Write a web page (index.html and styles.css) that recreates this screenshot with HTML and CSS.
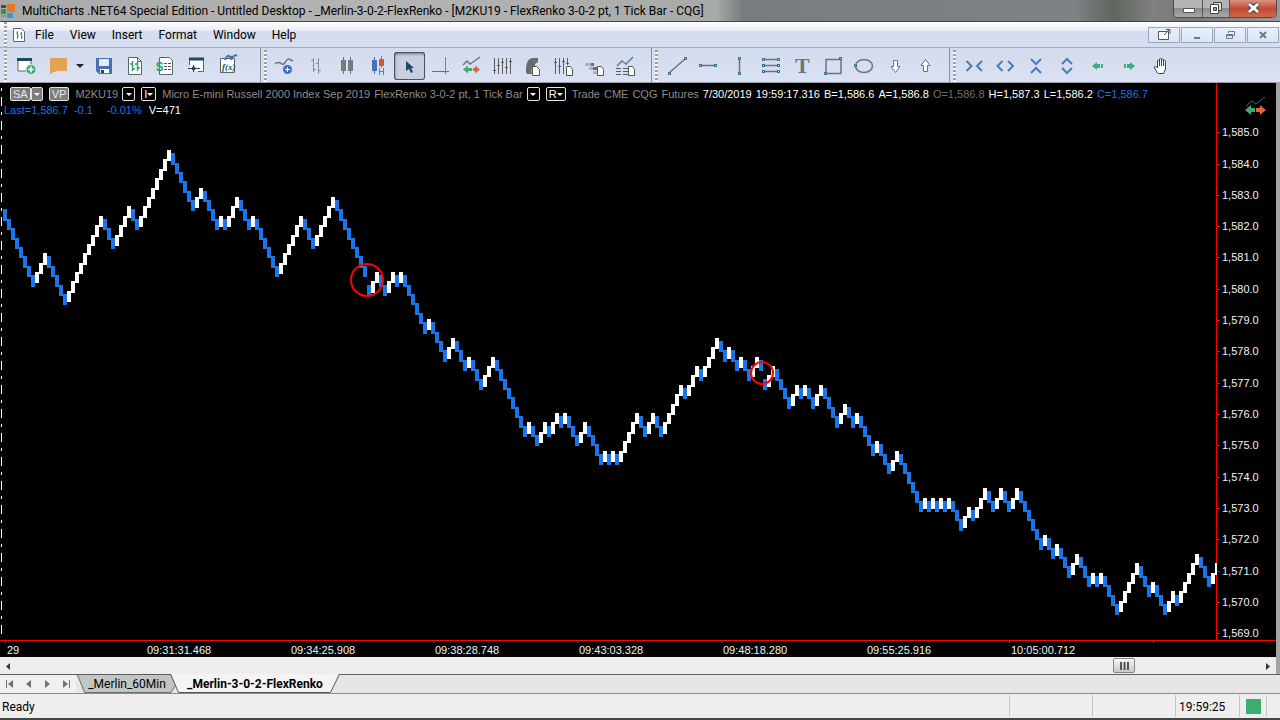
FILE: index.html
```
<!DOCTYPE html>
<html lang="en">
<head>
  <meta charset="UTF-8" />
  <meta name="viewport" content="width=device-width, initial-scale=1.0"/>
  <title>MultiCharts .NET64 Special Edition</title>
  <link rel="stylesheet" href="styles.css">
</head>

<body>
  <div class="app">
    <header class="titlebar">
      <svg class="logo" width="16" height="16" viewBox="0 0 16 16">
        <path d="M1 2h5v3H1z" fill="#4b4a2a"/>
        <path d="M7 1h8v8H7z" fill="#e07b1f"/>
        <path d="M1 6h5v5H1z" fill="#2c9a43"/>
        <path d="M1 12h5v2H1z" fill="#8e9294"/>
        <path d="M7 10h6v5H7z" fill="#2a9be0"/>
      </svg>
      <span class="title">MultiCharts .NET64 Special Edition - Untitled Desktop - _Merlin-3-0-2-FlexRenko - [M2KU19 - FlexRenko 3-0-2 pt, 1 Tick Bar - CQG]</span>
      <div class="window-buttons">
        <button aria-label="Minimize"><svg width="28" height="17"><path d="M9.500 8.500h11v4h-11z" fill="#fff" stroke="#555"/></svg></button>
        <button aria-label="Restore"><svg width="26" height="17"><path d="M10.500 2.500h8v8h-8z" fill="#ddd" stroke="#444"/><path d="M7.500 4.500h8v9h-8z" fill="#fff" stroke="#444"/><path d="M10.500 7.500h3v3h-3z" fill="#999" stroke="#444"/></svg></button>
        <button class="close" aria-label="Close"><svg width="46" height="17"><path d="M19 4l9 8M28 4l-9 8" stroke="#444" stroke-width="5"/><path d="M19 4l9 8M28 4l-9 8" stroke="#fff" stroke-width="3"/></svg></button>
      </div>
    </header>

    <nav class="menubar">
      <span class="grip"></span>
      <svg class="doc-icon" width="12" height="14"><path d="M.5.5h8l3 3v10H.5z" fill="#fff" stroke="#5c6468"/><path d="M4.500 3v8M3 5h1.500M4.500 8H6M8.500 4v7M7 6h1.500M8.500 9H10" stroke="#2f9e63" fill="none"/></svg>
      <button>File</button>
      <button>View</button>
      <button>Insert</button>
      <button>Format</button>
      <button>Window</button>
      <button>Help</button>
      <div class="child-buttons">
        <button aria-label="Detach"><svg width="30" height="14"><path d="M9.500 3.500h10v8h-10z" fill="#fff" stroke="#555"/><path d="M15 7l5-5M17 1.500h4v4" fill="none" stroke="#555"/></svg></button>
        <button aria-label="Minimize"><svg width="30" height="14"><path d="M12 10h6" stroke="#6d7b86" stroke-width="2"/></svg></button>
        <button aria-label="Restore"><svg width="30" height="14"><path d="M13.500 5V3.500h6v4H18M11.500 6.500h6v4h-6zM11.500 7.500h6" fill="none" stroke="#6d7b86"/></svg></button>
        <button aria-label="Close"><svg width="30" height="14"><path d="M12 4l6 6M18 4l-6 6" stroke="#6d7b86" stroke-width="2"/></svg></button>
      </div>
    </nav>

    <div class="toolbar">
      <div class="group main-group">
        <span class="grip"></span>
        <button aria-label="New window"><svg class="icon"><path d="M7 7h13v12H7z" fill="#fff" stroke="#5c6468"/><path d="M6 7.500h15" stroke="#1d4964" stroke-width="3"/><circle cx="20" cy="17.500" r="5" fill="#3cab70" stroke="#dce4f2"/><path d="M17 17.500h6M20 14.500v6" stroke="#fff" stroke-width="1.500"/></svg></button>
        <button aria-label="Open"><svg class="icon"><path d="M8 6h17v13h-9c-2 0-2 1-4 1-2 0-2 2-4 2z" fill="#e2a352"/></svg></button>
        <button class="caret" aria-label="Open recent"><svg width="15" height="28"><path d="M3 12h8l-4 4z" fill="#222"/></svg></button>
        <button aria-label="Save"><svg class="icon"><path d="M8 6h16v16H11l-3-3z" fill="#4472b5"/><path d="M11 7h10v7H11z" fill="#e4ebf5"/><path d="M12 17h9v4h-9z" fill="#fff"/><path d="M13 18h3v3h-3z" fill="#1d4964"/></svg></button>
        <button aria-label="New chart"><svg class="icon"><path d="M9.500 5.500h9l4 4v13h-13z" fill="#fff" stroke="#5c6468"/><path d="M18.500 5.500v4h4" fill="none" stroke="#5c6468"/><path d="M13.500 9v10M11 12h2.500M13.500 17H16M18.500 10v9M16 12h2.500M18.500 16H21" fill="none" stroke="#2f9e63" stroke-width="1.500"/></svg></button>
        <button aria-label="Market scanner"><svg class="icon"><path d="M9.500 5.500h10l3 3v14h-13z" fill="#fff" stroke="#5c6468"/><path d="M14 11.500h3M18 11.500h3M14 14.500h3M18 14.500h3M14 17.500h3M18 17.500h3" stroke="#555"/><text x="6" y="19" class="dollar">$</text></svg></button>
        <button aria-label="DOM window"><svg class="icon"><path d="M9 7h13v12H9z" fill="#fff"/><path d="M8.500 7v6M22.500 7v12.500H17" fill="none" stroke="#5c6468"/><path d="M8 7h15" stroke="#1d4964" stroke-width="3"/><path d="M7 16.500h12M12.500 13v7" stroke="#1d4964"/><circle cx="12.500" cy="16.500" r="2" fill="#1d4964"/></svg></button>
        <button aria-label="Formula editor"><svg class="icon"><path d="M8.500 6.500h14v14h-14z" fill="#fff" stroke="#5c6468"/><path d="M13 8c2-5 4-5 5-3s1 1 2-1M19 8c2-5 3-4 6-5" fill="none" stroke="#4472b5" stroke-width="2"/><text x="10" y="18" class="fx">f(x)</text></svg></button>
      </div>

      <div class="group">
        <span class="grip"></span>
        <button aria-label="Insert study"><svg class="icon"><path d="M5 12c3-3 5-1 7 0 3 2 4-6 7-5l4 2" fill="none" stroke="#707277" stroke-width="1.500"/><circle cx="17.500" cy="17.500" r="4.500" fill="#4472b5"/><path d="M15 17.500h5M17.500 15v5" stroke="#fff"/></svg></button>
        <button aria-label="OHLC bar"><svg class="icon"><path d="M12.500 6v14M10 8.500h2.500M12.500 17.500H15M17.500 6v16M15 11.500h2.500M17.500 18.500H20" stroke="#8b8d93" fill="none"/></svg></button>
        <button aria-label="Candlestick"><svg class="icon"><path d="M11.500 5v17M18.500 5v17" stroke="#6f7176"/><path d="M9 8h5v11H9zM16 8h5v11h-5z" fill="#77797d"/></svg></button>
        <button aria-label="Hollow candlestick"><svg class="icon"><path d="M11.500 5v17" stroke="#4472b5"/><path d="M9 8h5v11H9z" fill="#4472b5"/><path d="M18.500 4v12" stroke="#d9542f"/><path d="M16 7h5v7h-5z" fill="#d9542f"/><path d="M16.500 16v7M20.500 16v7M16.500 19.500h4" stroke="#2f9e63"/></svg></button>
        <button class="active" aria-label="Pointer"><svg class="icon"><path d="M12 9v10l3-2 2 4 2-1-2-4h3z" fill="#1d4964"/></svg></button>
        <button aria-label="Crosshair"><svg class="icon"><path d="M7 19.500h17" stroke="#4472b5"/><path d="M20.500 5v17" stroke="#5b86bd"/></svg></button>
        <button aria-label="Chart trading"><svg class="icon"><path d="M7 13l4-4 3 3 3-2 7-5" fill="none" stroke="#707277" stroke-width="1.500"/><path d="M7 17.500l5-4v2.500h4v3h-4v2.500z" fill="#3cab70"/><path d="M24 17.500l-5-4v2.500h-2v3h2v2.500z" fill="#e2643a"/></svg></button>
        <button aria-label="Bar spacing"><svg class="icon"><path d="M7.500 6v16M11.500 6v16M15.500 6v16M19.500 6v16M23.500 6v16M6 18.500h3M10 13.500h3M14 10.500h3M18 15.500h3M22 9.500h3" stroke="#5a5c60" fill="none"/></svg></button>
        <button aria-label="Symbol link"><svg class="icon"><path d="M8 20c0-8 1-14 8-14h4v4l-3 2v3c-3-1-4 2-3 7H9z" fill="#696b70"/><path class="page" d="M14.500 14.500h4l3 3v6h-7z"/></svg></button>
        <button aria-label="Resolution"><svg class="icon"><path d="M6.500 6v16M10.500 6v16M14.500 6v16M18.500 6v7M5 10.500h3M9 14.500h3M13 9.500h3M17 11.500h3" stroke="#5a5c60" fill="none"/><path class="page" d="M17.500 14.500h4l2 3v6h-6z"/></svg></button>
        <button aria-label="Market depth"><svg class="icon"><path d="M5 11h8v3H5zM9 15h8v3H9zM13 19h5v3h-5z" fill="#afb2b8"/><path d="M11 11h3v3h-3zM13 15h5v3h-5z" fill="#696b70"/><path class="page" d="M17.500 14.500h4l2 3v6h-6z"/></svg></button>
        <button aria-label="Data window"><svg class="icon"><path d="M6 14l5-5 4 3 7-7" fill="none" stroke="#6479a8" stroke-width="1.500"/><path d="M5 16.500h5M12 16.500h5M5 19.500h5M12 19.500h5M5 22.500h5M12 22.500h5" stroke="#5a5c60"/><path class="page" d="M17.500 14.500h4l2 3v6h-6z"/></svg></button>
      </div>

      <div class="group">
        <span class="grip"></span>
        <button aria-label="Trend line"><svg class="icon"><path class="draw" d="M8 21L24 7"/><path class="knob" d="M7.500 20.500h2v2h-2zM23.500 5.500h2v2h-2z"/></svg></button>
        <button aria-label="Horizontal line"><svg class="icon"><path class="draw" d="M9 13.500h14"/><path class="knob" d="M7.500 12.500h2v2h-2zM22.500 12.500h2v2h-2z"/></svg></button>
        <button aria-label="Vertical line"><svg class="icon"><path class="draw" d="M16.500 7v14"/><path class="knob" d="M15.500 5.500h2v2h-2zM15.500 20.500h2v2h-2z"/></svg></button>
        <button aria-label="Parallel lines"><svg class="icon"><path class="draw" d="M9 7.500h16M9 13.500h16M9 19.500h16"/><path class="knob" d="M8.500 6.500h2v2h-2zM23.500 6.500h2v2h-2zM8.500 12.500h2v2h-2zM23.500 12.500h2v2h-2zM8.500 18.500h2v2h-2zM23.500 18.500h2v2h-2z"/></svg></button>
        <button aria-label="Text"><svg class="icon"><text x="10" y="21" class="tee">T</text></svg></button>
        <button aria-label="Rectangle"><svg class="icon"><path class="draw" d="M10 7.500h15v14H10z"/><path class="knob" d="M23.500 5.500h2v2h-2zM8.500 20.500h2v2h-2z"/></svg></button>
        <button aria-label="Ellipse"><svg class="icon"><ellipse class="draw" cx="17" cy="14" rx="8.500" ry="6.500"/><path class="knob" d="M7.500 12.500h2v2h-2z"/></svg></button>
        <button aria-label="Arrow down"><svg class="icon"><path d="M15.500 8.500h4v6h2.500l-4.500 6-4.500-6h2.500z" fill="#fff" stroke="#707277"/></svg></button>
        <button aria-label="Arrow up"><svg class="icon"><path d="M14.500 19.500h4v-6H21l-4.500-6-4.500 6h2.500z" fill="#fff" stroke="#707277"/></svg></button>
      </div>

      <div class="group last">
        <span class="grip"></span>
        <button aria-label="Decrease spacing"><svg class="icon"><path class="chev" d="M7.500 9l5 5-5 5M23 9l-5 5 5 5"/></svg></button>
        <button aria-label="Increase spacing"><svg class="icon"><path class="chev" d="M12.500 9l-5 5 5 5M18 9l5 5-5 5"/></svg></button>
        <button aria-label="Compress scale"><svg class="icon"><path class="chev" d="M10 7l5 5 5-5M10 21l5-5 5 5"/></svg></button>
        <button aria-label="Expand scale"><svg class="icon"><path class="chev" d="M10 12l5-5 5 5M10 16l5 5 5-5"/></svg></button>
        <button aria-label="Scroll left"><svg class="icon"><path d="M9 14l5-4v2h3v4h-3v2zM18 12h2v4h-2z" fill="#34b277"/></svg></button>
        <button aria-label="Scroll right"><svg class="icon"><path d="M21 14l-5-4v2h-3v4h3v2zM10 12h2v4h-2z" fill="#34b277"/></svg></button>
        <button aria-label="Hand"><svg class="icon"><path d="M12.500 21l-3-5c-1-2 1-2 2-1l1 1V9c0-1.500 2-1.500 2 0V7.500c0-1.500 2-1.500 2 0V8c0-1.500 2-1.500 2 0v1.500c0-1.500 2-1.500 2 0V17l-2 4.500h-5z" fill="#fff" stroke="#1d4964"/><path d="M14.500 9v5M16.500 8v6M18.500 9v5" stroke="#1d4964"/></svg></button>
      </div>
    </div>

    <main class="chart">
      <svg class="plot" id="plot"></svg>
      <div class="info">
        <div class="info-row">
          <span class="split"><button class="tag">SA</button><button class="tag" aria-label="SA options"><i class="down"></i></button></span>
          <button class="tag">VP</button>
          <span class="dim">M2KU19</span>
          <button class="drop" aria-label="Symbol"><i class="down"></i></button>
          <button class="drop">I<i class="down"></i></button>
          <span class="dim">Micro E-mini Russell 2000 Index Sep 2019</span>
          <span class="dim">FlexRenko 3-0-2 pt, 1 Tick Bar</span>
          <button class="drop" aria-label="Resolution"><i class="down"></i></button>
          <button class="drop">R<i class="down"></i></button>
          <span class="dim">Trade</span>
          <span class="dim">CME</span>
          <span class="dim">CQG</span>
          <span class="dim">Futures</span>
          <span>7/30/2019</span>
          <span>19:59:17.316</span>
          <span>B=1,586.6</span>
          <span>A=1,586.8</span>
          <span class="open">O=1,586.8</span>
          <span>H=1,587.3</span>
          <span>L=1,586.2</span>
          <span class="blue">C=1,586.7</span>
        </div>
        <div class="info-row quote">
          <span class="blue">Last=1,586.7</span>
          <span class="blue change">-0.1</span>
          <span class="blue percent">-0.01%</span>
          <span>V=471</span>
        </div>
      </div>
      <svg class="trade-icon" width="22" height="20"><path d="M1 9l6-5 4 3 9-7" fill="none" stroke="#3f618f"/><path d="M0 13l6-5v3h4v4H6v3z" fill="#3cab70"/><path d="M21 13l-6-5v3h-4v4h4v3z" fill="#e2643a"/></svg>
    </main>

    <div class="scrollbar">
      <button aria-label="Scroll left"><svg width="16" height="16"><path d="M10 5v7L6 8.500z" fill="#333"/></svg></button>
      <div class="track"><button class="thumb" aria-label="Scroll position"><svg width="9" height="8"><path d="M1 0v8M4.500 0v8M8 0v8" stroke="#555" stroke-width="2"/></svg></button></div>
      <button aria-label="Scroll right"><svg width="16" height="16"><path d="M6 5v7l4-3.500z" fill="#333"/></svg></button>
    </div>

    <div class="tabs">
      <button class="nav" aria-label="First"><svg width="19" height="18"><path d="M6.500 5v8" stroke="#707277"/><path d="M13 5v8L8 9z" fill="#707277"/></svg></button>
      <button class="nav" aria-label="Previous"><svg width="19" height="18"><path d="M12 5v8L7 9z" fill="#707277"/></svg></button>
      <button class="nav" aria-label="Next"><svg width="19" height="18"><path d="M7 5v8l5-4z" fill="#707277"/></svg></button>
      <button class="nav" aria-label="Last"><svg width="19" height="18"><path d="M6 5v8l5-4z" fill="#707277"/><path d="M12.500 5v8" stroke="#707277"/></svg></button>
      <button class="tab"><svg viewBox="0 0 100 18" preserveAspectRatio="none"><path d="M.5 0l7 17.500H94l5-8L94 0" fill="#c0c6c4" stroke="#6c6c6c"/></svg><span>_Merlin_60Min</span></button>
      <button class="tab current"><svg viewBox="0 0 170 18" preserveAspectRatio="none"><path d="M.5-1l8 18.500h152l9-18.500" fill="#f4f4f4" stroke="#555"/></svg><span>_Merlin-3-0-2-FlexRenko</span></button>
    </div>

    <footer class="status">
      <span class="message">Ready</span>
      <span class="cell"></span>
      <span class="cell"></span>
      <span class="cell time">19:59:25</span>
      <span class="cell light"><i></i></span>
      <span class="cell end"></span>
    </footer>
  </div>

  <script src="chart.js"></script>
</body>
</html>
```
FILE: styles.css
```
* {
  box-sizing: border-box;
}

body {
  margin: 0;
  font-family: Roboto, "Open Sans", sans-serif;
  font-size: 12px;
  color: #000;
}

button {
  padding: 0;
  border: none;
  background: none;
  font: inherit;
  color: inherit;
}

svg {
  display: block;
}

.app {
  display: flex;
  flex-direction: column;
  height: 100vh;
  overflow: hidden;
  background: #efeeee;
}

.titlebar {
  display: flex;
  align-items: center;
  height: 22px;
  border-bottom: 1px solid #444;
  background: linear-gradient(to right, #a9a9a9, #b4b4b4 30%, #a8a9a9 56%, #787c7e 58%, #7e8284 84%, #5e665f 87%, #80807f 90%, #777 93%, #9a9a9a);
}

.logo {
  margin-right: 6px;
}

.title {
  flex: 1;
  white-space: nowrap;
}

.window-buttons {
  display: flex;
  align-self: flex-start;
  margin-right: 3px;
  border: 1px solid #4b4b4b;
  border-top: none;
  border-radius: 0 0 5px 5px;
  overflow: hidden;
}

.window-buttons button {
  background: linear-gradient(#b4b4b4 45%, #8b8b8b 50%, #a9a9a9);
  border-right: 1px solid #555;
}

.window-buttons .close {
  background: linear-gradient(#d89582, #c34a30 50%, #d2694a);
  border-right: none;
}

.menubar {
  display: flex;
  align-items: center;
  height: 26px;
  padding-left: 4px;
  background: linear-gradient(#fff, #e6ebf6 35%, #d5ddee 36%, #d5ddee);
  border-bottom: 1px solid #a6abb7;
}

.grip {
  width: 3px;
  align-self: stretch;
  background: repeating-linear-gradient(#9aa1ae 0 2px, #f4f7fc 2px 4px);
}

.doc-icon {
  margin: 0 2px 0 6px;
}

.menubar > button {
  padding: 0 8px;
}

.child-buttons {
  display: flex;
  gap: 1px;
  margin-left: auto;
  margin-right: 1px;
}

.child-buttons button {
  border: 1px solid #9aa9bb;
  background: linear-gradient(#e8eff8, #d8e6f5);
}

.toolbar {
  display: flex;
  height: 35px;
  background: linear-gradient(#d3dbec, #d9e1f2);
  border-bottom: 1px solid #9a9fab;
}

.group {
  display: flex;
  align-items: center;
  padding: 2px 9px 0 3px;
  border-right: 1px solid #8b909b;
}

.group .grip {
  margin-right: 3px;
}

.main-group {
  padding-right: 17px;
}

.main-group .grip {
  margin: 0 4px 0 1px;
}

.last {
  border-right: none;
}

.icon {
  width: 31px;
  height: 28px;
}

.active {
  border-radius: 3px;
  background: #c9cfdf;
  box-shadow: inset 0 0 0 1px #4d5157, inset 1px 2px 3px #777;
}

.page {
  fill: #fff;
  stroke: #4d5a4d;
}

.draw {
  fill: none;
  stroke: #707277;
  stroke-width: 1.5;
}

.knob {
  fill: #e4ecf8;
  stroke: #1d5e88;
}

.chev {
  fill: none;
  stroke: #4a7db8;
  stroke-width: 2;
}

.dollar {
  font: bold 13px "Liberation Sans", sans-serif;
  fill: #2f9e63;
}

.fx {
  font: italic bold 9px "Liberation Serif", serif;
  fill: #1d4964;
}

.tee {
  font: bold 22px "Liberation Serif", serif;
  fill: #707277;
}

.chart {
  flex: 1;
  min-height: 0;
  display: grid;
  grid-template-rows: minmax(0, 1fr);
  background: #000;
  border-right: 4px solid #a3a3a3;
  font: 11px/16px "Liberation Sans", Arial, sans-serif;
  color: #fff;
}

.plot,
.info,
.trade-icon {
  grid-area: 1 / 1;
}

.plot {
  width: 100%;
  height: 100%;
}

.plot text {
  fill: #f2f2f2;
}

.info {
  padding: 3px 0 0 10px;
}

.info-row {
  display: flex;
  align-items: center;
  gap: 4px;
  height: 16px;
  white-space: nowrap;
}

.dim {
  color: #8d8d8d;
}

.open {
  color: #6f6f6f;
}

.blue {
  color: #1b74e8;
}

.quote {
  gap: 6px;
  margin-left: -6px;
}

.percent {
  margin: 0 1px 0 8px;
}

.split {
  display: flex;
}

.tag,
.drop {
  display: flex;
  align-items: center;
  justify-content: center;
  height: 14px;
  padding: 0 2px;
  border: 1px solid #e4e4e4;
  border-radius: 2px;
  line-height: 12px;
}

.tag {
  background: #7d7d7d;
  color: #e8e8e8;
}

.split,
.info-row > .tag,
.drop {
  margin-right: 2px;
}

.drop {
  min-width: 13px;
}

.down {
  border: 3px solid transparent;
  border-top-color: #fff;
  border-bottom: none;
}

.trade-icon {
  justify-self: end;
  margin: 14px 9px 0 0;
}

.scrollbar {
  display: flex;
  height: 17px;
  background: #ededed;
  border-right: 4px solid #a3a3a3;
}

.track {
  flex: 1;
  display: flex;
  justify-content: flex-end;
  align-items: center;
}

.thumb {
  display: flex;
  align-items: center;
  justify-content: center;
  width: 22px;
  height: 15px;
  margin-right: 125px;
  border: 1px solid #888;
  border-radius: 2px;
  background: linear-gradient(#f6f6f6, #c9c9cd);
}

.tabs {
  display: flex;
  height: 20px;
  border-top: 1px solid #5f5f5f;
  border-bottom: 1px solid #8c8c8c;
  background: #e6e6e6;
}

.nav {
  background: #f0f0f0;
}

.tab {
  position: relative;
  width: 100px;
  margin-left: 1px;
}

.tab svg {
  position: absolute;
  inset: 0;
  width: 100%;
  height: 100%;
  overflow: visible;
}

.tab span {
  position: relative;
}

.current {
  width: 170px;
  margin-left: -7px;
  font-weight: bold;
}

.status {
  display: flex;
  height: 26px;
  padding: 1px 0;
  line-height: 25px;
  border-bottom: 2px solid #444;
}

.message {
  flex: 1;
  padding-left: 2px;
}

.cell {
  width: 83px;
  border-left: 1px solid #c6c6c6;
}

.time {
  width: 64px;
  padding-left: 3px;
}

.light {
  width: 27px;
  padding: 4px 6px;
}

.light i {
  display: block;
  width: 15px;
  height: 15px;
  background: #3aae70;
}

.end {
  width: 14px;
}
```
FILE: chart.js
```
const plot = document.getElementById("plot");
const BLUE = "#1b74e8";
const RED = "#ff0000";
const AXIS_X = 1216;
const AXIS_Y = 557;

// bars per swing, starting with a down swing; "g" is a down swing after a gap
const swings = [
  8, 3, 5, 9, 3, 4, 2, 8, 6, 2, 4, 1, 1, 3, 3, 1, 6, 6, 3, 5, 8,
  "g", 2, 2, 2, 1, 1, 6, 1, 4, 2, 3, 1, 3, 3, 8, 1, 2, 2, 1, 2, 1, 1, 3, 2, 4, 1, 1, 1, 1,
  5, 2, 2, 2, 5, 1, 3, 1, 4, 2, 1, 2, 1, 2, 2, 1,
  "g", 2, 4, 2, 1, 1, 2, 2, 4, 2, 2, 1, 4, 1, 3, 2, 6, 1, 1, 1, 1, 1, 1, 1,
  3, 2, 1, 3, 2, 2, 2, 2, 6, 1, 2, 1, 3, 2, 3, 1, 1, 1, 4, 5, 3, 1, 3, 2, 1, 5, 3, 2
];

function add(tag, attrs, text) {
  const el = document.createElementNS("http://www.w3.org/2000/svg", tag);
  for (const key in attrs) el.setAttribute(key, attrs[key]);
  if (text) el.textContent = text;
  plot.appendChild(el);
}

function rect(x, y, width, height, fill) {
  add("rect", { x, y, width, height, fill });
}

function priceY(price) {
  return 49.2 + (1585 - price) * 31.31;
}

function drawBars() {
  let high = 1582.5;
  let x = 3;
  let up = false;
  let first = true;
  swings.forEach(swing => {
    if (swing === "g") {
      high -= 0.6;
      swing = 1;
    } else if (!first) {
      up = !up;
      high += up ? 0.1 : -0.1;
    }
    for (let i = 0; i < swing; i++) {
      if (i > 0) high += up ? 0.3 : -0.3;
      const top = Math.round(priceY(high)) - 1;
      const bottom = Math.round(priceY(high - 0.3)) + 1;
      rect(x, top, Math.min(4, AXIS_X + 1 - x), bottom - top, up ? "#fff" : BLUE);
      x += 4;
    }
    first = false;
  });
}

function drawAxes() {
  add("path", { d: "M1.500 -10V557", stroke: "#fff", "stroke-dasharray": "9 6 3 6" });
  rect(AXIS_X, 0, 1, AXIS_Y, RED);
  rect(0, AXIS_Y, 1276, 1, RED);
  for (let price = 1585; price >= 1569; price--) {
    const y = Math.round(priceY(price));
    rect(AXIS_X, y, 4, 1, RED);
    if (price > 1569) rect(AXIS_X, y + 16, 2, 1, RED);
    add("text", { x: 1222, y: y + 4 }, "1," + (price - 1000) + ".0");
  }
  const times = ["09:31:31.468", "09:34:25.908", "09:38:28.748", "09:43:03.328", "09:48:18.280", "09:55:25.916", "10:05:00.712", ""];
  rect(5, AXIS_Y, 1, 3, RED);
  add("text", { x: 7, y: 571 }, "29");
  times.forEach((time, i) => {
    const x = 145 + i * 144;
    rect(x, AXIS_Y, 1, 3, RED);
    add("text", { x: x + 2, y: 571 }, time);
  });
}

drawAxes();
drawBars();
add("circle", { cx: 367, cy: 197, r: 16, fill: "none", stroke: RED, "stroke-width": 2 });
add("circle", { cx: 762, cy: 290, r: 11, fill: "none", stroke: RED, "stroke-width": 2 });
```
